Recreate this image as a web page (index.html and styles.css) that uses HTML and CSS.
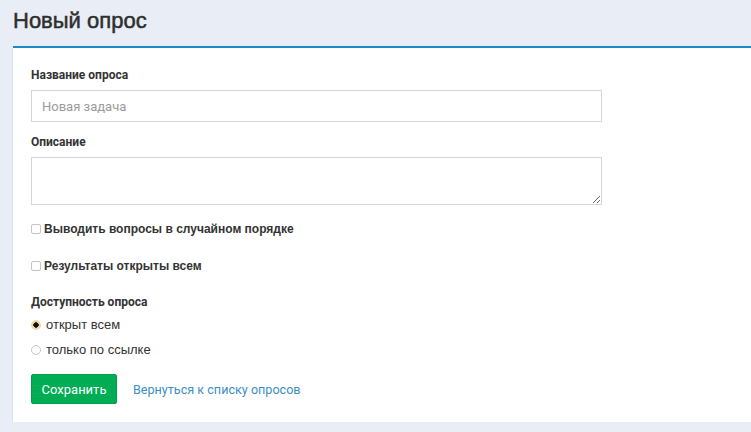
FILE: index.html
```html
<!DOCTYPE html>
<html lang="ru">

<head>
    <meta charset="UTF-8">
    <meta name="viewport" content="width=device-width, initial-scale=1.0">
    <title>Новый опрос</title>
    <link rel="stylesheet" href="styles.css">
</head>

<body>
    <h1 class="page-title">Новый опрос</h1>
    <div class="card">
        <form class="poll-form">
            <label class="field-label" for="title">Название опроса</label>
            <input class="text-input" id="title" type="text" placeholder="Новая задача">

            <label class="field-label" for="descr">Описание</label>
            <textarea class="text-area" id="descr"></textarea>

            <label class="check-row first">
                <input type="checkbox" class="check">Выводить вопросы в случайном порядке
            </label>
            <label class="check-row">
                <input type="checkbox" class="check">Результаты открыты всем
            </label>

            <div class="field-label access">Доступность опроса</div>
            <label class="radio-row">
                <input type="radio" name="access" class="radio" checked>открыт всем
            </label>
            <label class="radio-row">
                <input type="radio" name="access" class="radio">только по ссылке
            </label>

            <div class="actions">
                <button type="button" class="btn-save">Сохранить</button>
                <a href="#" class="back-link">Вернуться к списку опросов</a>
            </div>
        </form>
    </div>
</body>

</html>
```

FILE: styles.css
```css
body {
    margin: 0;
    background-color: #e9eef6;
    font-family: Roboto, "Liberation Sans", sans-serif;
    color: #333;
}

.page-title {
    margin: 0;
    padding: 8px 13px 12px;
    font-family: "Liberation Sans", Arial, sans-serif;
    font-size: 22px;
    line-height: 26px;
    font-weight: normal;
    -webkit-text-stroke: 0.5px #2e2e2e;
    color: #2e2e2e;
}

.card {
    margin-left: 13px;
    background-color: #fff;
    border-top: 2px solid #2188c6;
    box-shadow: 0 1px 2px rgba(0, 0, 0, 0.12);
    padding: 20px 18px 18px;
}

.poll-form {
    display: flex;
    flex-direction: column;
    align-items: flex-start;
}

.field-label {
    display: block;
    font-size: 12px;
    line-height: 14px;
    font-weight: bold;
    color: #333;
    margin-bottom: 8px;
}

.text-input,
.text-area {
    box-sizing: border-box;
    width: 571px;
    border: 1px solid #d4d4dc;
    border-radius: 0;
    padding: 0 10px;
    font-family: Roboto, sans-serif;
    font-size: 13px;
    color: #333;
    margin: 0;
}

.text-input {
    height: 32px;
    margin-bottom: 13px;
}

.text-input::placeholder {
    color: #9b9b9b;
}

.text-area {
    height: 48px;
    resize: vertical;
    padding: 6px 10px;
}

.check-row {
    display: flex;
    align-items: center;
    font-family: "Liberation Sans", Arial, sans-serif;
    font-size: 12px;
    line-height: 16px;
    font-weight: bold;
    color: #333;
    margin-top: 21px;
}

.check-row.first {
    margin-top: 16px;
}

.check {
    appearance: none;
    box-sizing: border-box;
    width: 10px;
    height: 10px;
    margin: 0 3px 0 0;
    border: 1px solid #c4c4c4;
    border-radius: 2px;
    background: #fff;
}

.access {
    margin-top: 21px;
    margin-bottom: 8px;
}

.radio-row {
    display: flex;
    align-items: center;
    font-family: "Liberation Sans", Arial, sans-serif;
    font-size: 13px;
    line-height: 16px;
    color: #333;
}

.radio-row + .radio-row {
    margin-top: 9px;
}

.radio {
    appearance: none;
    box-sizing: border-box;
    width: 10px;
    height: 10px;
    margin: 0 5px 0 0;
    border: 1px solid #c8c8c8;
    border-radius: 50%;
    background: #fff;
}

.radio:checked {
    border: 2px solid #ecd9a6;
    background: radial-gradient(circle, #111 0, #111 2.5px, #fff 3px);
}

.actions {
    display: flex;
    align-items: center;
    margin-top: 16px;
}

.btn-save {
    height: 30px;
    width: 86px;
    padding: 0;
    border: 1px solid #00a04e;
    border-radius: 2px;
    background-color: #00ad55;
    color: #fff;
    font-family: Roboto, sans-serif;
    font-size: 13px;
}

.back-link {
    margin-left: 16px;
    font-size: 12.6px;
    color: #3a8fc9;
    text-decoration: none;
}
```
